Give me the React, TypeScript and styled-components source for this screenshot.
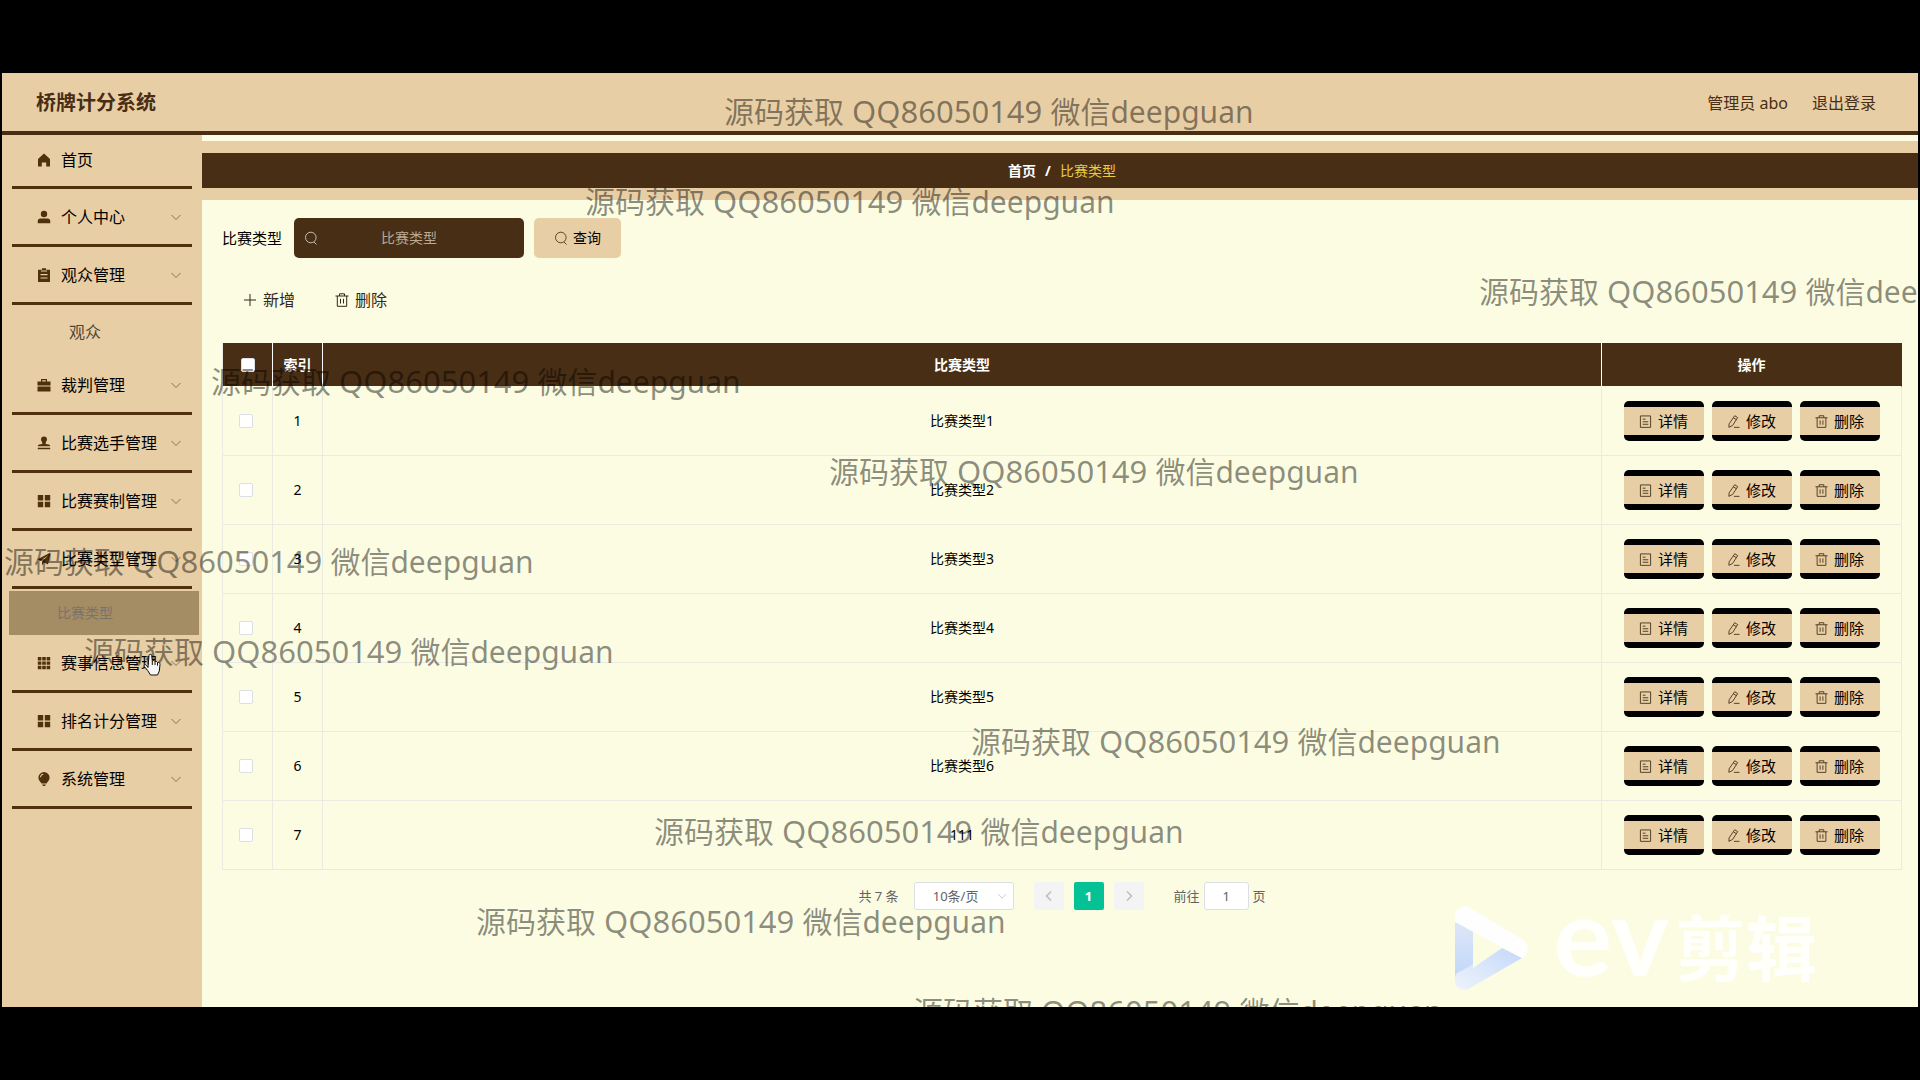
import React from 'react';
import styled, { createGlobalStyle, css } from 'styled-components';

const color = {
  sand: '#e8cea4',
  brown: '#482e15',
  line: '#4f310d',
  cream: '#fbfce1',
  grid: '#e9ebe3',
  muted: '#606266',
  green: '#04c295',
};

const GlobalStyle = createGlobalStyle`
  *, *::before, *::after { box-sizing: border-box; }
  body {
    margin: 0;
    background: #000;
    color: #000;
    font-family: 'Noto Sans', 'Noto Sans CJK SC', sans-serif;
    font-size: 14px;
    line-height: 20px;
  }
  button, input, select { font: inherit; color: inherit; margin: 0; }
  button { cursor: pointer; }
  a { color: inherit; text-decoration: none; }
`;

const Stage = styled.div`
  min-height: 100vh;
  padding: 73px 2px;
  display: flex;
`;

const Screen = styled.div`
  flex: 1;
  min-width: 0;
  display: flex;
  flex-direction: column;
  position: relative;
  overflow: hidden;
  background: ${color.cream};
`;

const Header = styled.header`
  height: 62px;
  padding: 2px 42px 0 34px;
  display: flex;
  align-items: center;
  justify-content: space-between;
  background: ${color.sand};
  border-bottom: 4px solid ${color.brown};
  color: ${color.brown};
`;

const Title = styled.h1`
  margin: 0;
  font-size: 20px;
  line-height: 28px;
  font-weight: 700;
`;

const UserArea = styled.div`
  display: flex;
  gap: 24px;
  font-size: 16px;
  line-height: 24px;
`;

const Body = styled.div`
  flex: 1;
  display: flex;
`;

const Sidebar = styled.nav`
  flex: none;
  width: 200px;
  background: ${color.sand};
`;

const MenuList = styled.ul`
  margin: 0;
  padding: 0;
  list-style: none;
`;

const MenuLink = styled.a<{ $first?: boolean }>`
  height: ${(p) => (p.$first ? 54 : 58)}px;
  margin: 0 10px;
  padding: ${(p) => (p.$first ? '0 9px 2px 25px' : '0 9px 0 25px')};
  display: flex;
  align-items: center;
  gap: 10px;
  border-bottom: 3px solid ${color.line};
  font-size: 16px;
  line-height: 24px;
  white-space: nowrap;

  & > svg { flex: none; color: ${color.line}; }
  & > svg:last-child { margin-left: auto; color: #8c7350; }
`;

const SubLink = styled.a<{ $active?: boolean }>`
  display: flex;
  align-items: center;
  height: 50px;
  margin: 2px 3px 0 7px;
  padding-left: 60px;
  font-size: 16px;
  line-height: 24px;
  color: #4f4536;
  ${(p) =>
    p.$active &&
    css`
      height: 44px;
      padding-left: 48px;
      font-size: 14px;
      background: #a48c65;
      color: #7c7367;
    `}
`;

const Main = styled.main`
  flex: 1;
  min-width: 0;
`;

const CrumbBar = styled.nav`
  margin-top: 6px;
  height: 59px;
  padding-left: 4px;
  display: flex;
  align-items: center;
  justify-content: center;
  gap: 9px;
  background: ${color.brown};
  border: solid ${color.sand};
  border-width: 12px 0;
  color: #fff;
  font-weight: 700;

  & > span:last-child { color: #ecc93f; font-weight: 400; }
`;

const Content = styled.div`
  padding: 18px 16px 0 20px;
`;

const SearchForm = styled.form`
  display: flex;
  align-items: center;

  & > label { font-size: 15px; margin-right: 12px; }
`;

const SearchBox = styled.div`
  width: 230px;
  height: 40px;
  margin-right: 10px;
  padding: 0 10px;
  display: flex;
  align-items: center;
  border-radius: 5px;
  background: ${color.brown};
  color: #c9c0b4;

  & > svg { flex: none; }
  & > input {
    flex: 1;
    min-width: 0;
    padding: 0 14px 0 0;
    border: 0;
    outline: 0;
    background: none;
    text-align: center;
    color: #fff;
  }
  & > input::placeholder { color: #b9aa97; opacity: 1; }
`;

const SearchButton = styled.button`
  width: 87px;
  height: 40px;
  padding: 0;
  display: flex;
  align-items: center;
  justify-content: center;
  gap: 5px;
  border: 0;
  border-radius: 5px;
  background: ${color.sand};

  & > svg { color: #5c4526; }
`;

const Toolbar = styled.div`
  display: flex;
  gap: 40px;
  padding: 30px 20px 31px 21px;
`;

const TextButton = styled.button`
  display: flex;
  align-items: center;
  gap: 6px;
  height: 24px;
  padding: 0;
  border: 0;
  background: none;
  font-size: 16px;
  color: #33281b;
`;

const Table = styled.table`
  width: 100%;
  table-layout: fixed;
  border-collapse: separate;
  border-spacing: 0;
  border-left: 1px solid ${color.grid};
  text-align: center;

  th, td { padding: 0; border-right: 1px solid ${color.grid}; }
  th {
    height: 44px;
    background: ${color.brown};
    color: #fff;
    border-right-color: #fff;
    border-bottom: 1px solid ${color.cream};
    font-weight: 700;
  }
  th:last-child { border-right-color: ${color.brown}; }
  td { height: 69px; border-bottom: 1px solid ${color.grid}; }
`;

const Col = styled.col<{ $w?: number }>`
  ${(p) => p.$w && `width: ${p.$w}px;`}
`;

const Check = styled.input`
  appearance: none;
  display: block;
  width: 14px;
  height: 14px;
  margin: 0 auto;
  border: 1px solid #dcdfe6;
  border-radius: 2px;
  background: #fff;

  td & { margin-left: 16px; }
  &:checked { background: ${color.green}; }
`;

const Actions = styled.div`
  display: flex;
  justify-content: center;
  gap: 8px;
`;

const ActionButton = styled.button`
  width: 80px;
  height: 40px;
  padding: 0;
  display: flex;
  align-items: center;
  justify-content: center;
  gap: 6px;
  border: solid #000;
  border-width: 6px 0;
  border-radius: 5px;
  background: ${color.sand};
  font-size: 15px;

  & > svg { color: #4a381f; }
`;

const Pager = styled.div`
  display: flex;
  justify-content: center;
  align-items: center;
  padding-top: 12px;
  font-size: 13px;
  color: ${color.muted};
`;

const SizePicker = styled.div`
  position: relative;
  width: 100px;
  margin: 0 20px 0 15px;

  & > select {
    appearance: none;
    display: block;
    width: 100%;
    height: 28px;
    padding: 0 16px 0 0;
    border: 1px solid #dcdfe6;
    border-radius: 3px;
    background: #fff;
    text-align: center;
    text-align-last: center;
  }
  & > svg {
    position: absolute;
    right: 6px;
    top: 8px;
    color: #c0c4cc;
    pointer-events: none;
  }
`;

const PageButton = styled.button<{ $active?: boolean }>`
  width: 30px;
  height: 28px;
  margin-right: 10px;
  padding: 0;
  display: flex;
  align-items: center;
  justify-content: center;
  border: 0;
  border-radius: 2px;
  background: ${(p) => (p.$active ? color.green : '#f4f4f5')};
  color: ${(p) => (p.$active ? '#fff' : '#bbbec6')};
  font-weight: 700;
`;

const Jump = styled.label`
  display: flex;
  align-items: center;
  gap: 4px;
  margin-left: 20px;

  & > input {
    width: 45px;
    height: 28px;
    padding: 0;
    border: 1px solid #dcdfe6;
    border-radius: 3px;
    background: #fff;
    text-align: center;
  }
`;

const Overlay = styled.div`
  position: absolute;
  inset: 0;
  pointer-events: none;
`;

const Mark = styled.span`
  position: absolute;
  font-size: 30px;
  line-height: 40px;
  white-space: pre;
  color: rgba(0, 0, 0, 0.45);
`;

const MarkNumber = styled.span`
  font-size: 31px;
`;

const Brand = styled.div`
  position: absolute;
  right: 101px;
  bottom: 17px;
  height: 84px;
  display: flex;
  align-items: center;
  color: rgba(255, 255, 255, 0.85);
  line-height: 84px;
  white-space: nowrap;

  & > svg { margin-right: 26px; }
`;

const BrandLatin = styled.span`
  font-family: Lato, sans-serif;
  font-size: 110px;
  font-weight: 700;
  margin: -30px 6px 0 0;
`;

const BrandHan = styled.span`
  font-size: 71px;
  font-weight: 700;
`;

const Cursor = styled.svg`
  position: absolute;
  left: 140px;
  top: 580px;
`;

const menuShapes: Record<string, React.ReactNode> = {
  home: <path d="M7 .6 13 6v7.4H9.2V9.5H4.8v3.9H1V6z" />,
  user: (
    <>
      <circle cx="7" cy="4" r="3.2" />
      <path d="M.8 13.2v-2c0-1.700.9-2.700 2.600-2.700h7.200c1.700 0 2.600 1 2.600 2.700v2z" />
    </>
  ),
  clipboard: (
    <path
      fillRule="evenodd"
      d="M5 .3h4v1.500h4V14H1V1.800h4zM4 2.600v1h6v-1zM3.500 6.100v1.100h7V6.100zm0 3.300v1.100h7V9.400z"
    />
  ),
  case: (
    <path
      fillRule="evenodd"
      d="M4 1h6v2.500h3.500v4H.500v-4H4zm1.200 1.200v1.300h3.600V2.200zM.500 8.500h13v5H.500z"
    />
  ),
  stamp: (
    <path d="M7 .5a3 3 0 0 1 3 3c0 1.500-1.300 2.300-1.300 3.500v1c2.300.3 4.600.5 4.600 2.200H.7C.7 8.500 3 8.300 5.300 8V7C5.300 5.800 4 5 4 3.500a3 3 0 0 1 3-3zM.8 11.800h12.400v1.400H.8z" />
  ),
  grid: <path d="M.8 1h5.400v5.400H.8zm7 0h5.400v5.400H7.800zM.8 7.800h5.400v5.400H.8zm7 0h5.400v5.400H7.800z" />,
  plane: <path d="M13.500.5 11 12.500 7 10.500 5 13.500V9.600L11 3.500 3.500 8.700.5 7.200z" />,
  cells: (
    <path d="M.8 1h3.600v3.400H.8zm4.400 0h3.600v3.400H5.200zm4.400 0h3.600v3.400H9.600zM.8 5.400h3.600v3.400H.8zm4.400 0h3.600v3.400H5.200zm4.400 0h3.600v3.400H9.600zM.8 9.800h3.600v3.400H.8zm4.400 0h3.600v3.400H5.200zm4.400 0h3.600v3.400H9.600z" />
  ),
  bulb: (
    <path
      fillRule="evenodd"
      d="M7 0a5.600 5.600 0 0 1 5.600 5.600c0 3-2.200 4.200-3.100 6H4.500c-.9-1.800-3.100-3-3.100-6A5.600 5.600 0 0 1 7 0zM3 5.300h1.100C4.200 3.800 5 2.900 6.300 2.700V1.700C4.400 1.900 3.100 3.300 3 5.300zM5 12.500h4L8 14H6z"
    />
  ),
};

const lineShapes: Record<string, React.ReactNode> = {
  down: <path d="m2.500 5 4.500 4.500L11.500 5" />,
  left: <path strokeWidth="1.600" d="M9 2.500 4.500 7 9 11.500" />,
  right: <path strokeWidth="1.600" d="M5 2.500 9.500 7 5 11.500" />,
  search: (
    <>
      <circle cx="6.800" cy="6.500" r="5.300" />
      <path d="m10 11 2.500 2.500" />
    </>
  ),
  plus: <path d="M7 1v12M1 7h12" />,
  trash: <path d="M.5 3h13M4.500 3V.8h5V3M2.300 3v10.300h9.400V3M5.500 5.800v4.700M8.500 5.800v4.700" />,
  doc: <path d="M1.500 1h11v12.300h-11zM4 4.500h3M4 7.300h6M4 10h6" />,
  edit: <path d="M8.300.8 11.500 2.800 6 11.300 2 13.300 2.300 9.500zM6.800 3 10 5M7.500 13.300h6" />,
};

const Solid = ({ name }: { name: string }) => (
  <svg width="14" height="14" viewBox="0 0 14 14" fill="currentColor" aria-hidden="true">
    {menuShapes[name]}
  </svg>
);

const Line = ({ name, size = 14 }: { name: string; size?: number }) => (
  <svg
    width={size}
    height={size}
    viewBox="0 0 14 14"
    fill="none"
    stroke="currentColor"
    strokeWidth="1"
    aria-hidden="true"
  >
    {lineShapes[name]}
  </svg>
);

const menu: { icon: string; label: string; sub?: string; active?: boolean }[] = [
  { icon: 'home', label: '首页' },
  { icon: 'user', label: '个人中心' },
  { icon: 'clipboard', label: '观众管理', sub: '观众' },
  { icon: 'case', label: '裁判管理' },
  { icon: 'stamp', label: '比赛选手管理' },
  { icon: 'grid', label: '比赛赛制管理' },
  { icon: 'plane', label: '比赛类型管理', sub: '比赛类型', active: true },
  { icon: 'cells', label: '赛事信息管理' },
  { icon: 'grid', label: '排名计分管理' },
  { icon: 'bulb', label: '系统管理' },
];

const rows = ['比赛类型1', '比赛类型2', '比赛类型3', '比赛类型4', '比赛类型5', '比赛类型6', '111'];

const actions = [
  { icon: 'doc', label: '详情' },
  { icon: 'edit', label: '修改' },
  { icon: 'trash', label: '删除' },
];

// Horizontal start of each watermark line; the lines are 90px apart.
const markStarts = [722, 583, 1477, 209, 827, 2, 82, 969, 652, 474, 911];

export default function App() {
  return (
    <Stage>
      <GlobalStyle />
      <Screen>
        <Header>
          <Title>桥牌计分系统</Title>
          <UserArea>
            <span>管理员 abo</span>
            <a href="#logout">退出登录</a>
          </UserArea>
        </Header>
        <Body>
          <Sidebar aria-label="主菜单">
            <MenuList>
              {menu.map((item, i) => (
                <li key={item.label}>
                  <MenuLink href="#menu" $first={i === 0}>
                    <Solid name={item.icon} />
                    <span>{item.label}</span>
                    {i > 0 && <Line name="down" />}
                  </MenuLink>
                  {item.sub && (
                    <SubLink href="#sub" $active={item.active}>
                      {item.sub}
                    </SubLink>
                  )}
                </li>
              ))}
            </MenuList>
          </Sidebar>
          <Main>
            <CrumbBar aria-label="面包屑">
              <a href="#home">首页</a>
              <span>/</span>
              <span>比赛类型</span>
            </CrumbBar>
            <Content>
              <SearchForm onSubmit={(e) => e.preventDefault()}>
                <label htmlFor="type">比赛类型</label>
                <SearchBox>
                  <Line name="search" />
                  <input id="type" placeholder="比赛类型" />
                </SearchBox>
                <SearchButton type="submit">
                  <Line name="search" />
                  查询
                </SearchButton>
              </SearchForm>
              <Toolbar>
                <TextButton type="button">
                  <Line name="plus" />
                  新增
                </TextButton>
                <TextButton type="button">
                  <Line name="trash" />
                  删除
                </TextButton>
              </Toolbar>
              <Table>
                <colgroup>
                  <Col $w={50} />
                  <Col $w={50} />
                  <Col />
                  <Col $w={300} />
                </colgroup>
                <thead>
                  <tr>
                    <th>
                      <Check type="checkbox" aria-label="全选" />
                    </th>
                    <th>索引</th>
                    <th>比赛类型</th>
                    <th>操作</th>
                  </tr>
                </thead>
                <tbody>
                  {rows.map((name, i) => (
                    <tr key={name}>
                      <td>
                        <Check type="checkbox" aria-label={name} />
                      </td>
                      <td>{i + 1}</td>
                      <td>{name}</td>
                      <td>
                        <Actions>
                          {actions.map((a) => (
                            <ActionButton key={a.label} type="button">
                              <Line name={a.icon} size={13} />
                              {a.label}
                            </ActionButton>
                          ))}
                        </Actions>
                      </td>
                    </tr>
                  ))}
                </tbody>
              </Table>
              <Pager>
                <span>共 7 条</span>
                <SizePicker>
                  <select aria-label="每页条数">
                    <option>10条/页</option>
                  </select>
                  <Line name="down" size={12} />
                </SizePicker>
                <PageButton type="button" aria-label="上一页">
                  <Line name="left" />
                </PageButton>
                <PageButton type="button" $active>
                  1
                </PageButton>
                <PageButton type="button" aria-label="下一页">
                  <Line name="right" />
                </PageButton>
                <Jump>
                  前往
                  <input defaultValue="1" />页
                </Jump>
              </Pager>
            </Content>
          </Main>
        </Body>
        <Overlay>
          {markStarts.map((left, i) => (
            <Mark key={left} style={{ left, top: 18 + i * 90 }}>
              源码获取<MarkNumber> QQ86050149 </MarkNumber>微信deepguan
            </Mark>
          ))}
          <Brand>
            <svg width="73" height="84" viewBox="0 0 73 84" aria-hidden="true">
              <defs>
                <linearGradient id="side" x1="0" y1="0" x2="0" y2="1">
                  <stop offset="0" stopColor="#dfe7f6" />
                  <stop offset="1" stopColor="#bfd6fb" />
                </linearGradient>
                <linearGradient id="base" x1="0" y1="1" x2="1" y2="0">
                  <stop offset="0" stopColor="#eef3fa" />
                  <stop offset="1" stopColor="#c4d8fa" />
                </linearGradient>
              </defs>
              <path d="M0 14h18v48L0 74z" fill="url(#side)" />
              <path d="M0 72c0-4 3-6 6-7L47 42l20 10L15 82C8 86 0 82 0 75z" fill="url(#base)" />
              <path d="M0 10C0 2 8-2 15 2l52 31c8 5 8 15 0 19L0 16z" fill="#fefefe" />
              <path d="M18 27v35l29-20z" fill="#fbfce1" />
            </svg>
            <BrandLatin>ev</BrandLatin>
            <BrandHan>剪辑</BrandHan>
          </Brand>
          <Cursor width="20" height="24" viewBox="0 0 20 24" aria-hidden="true">
            <path
              d="M6 14.500 7 2.500c.2-1.600 2.600-1.600 2.700 0l.6 5.500c1.200-.8 2.300-.3 2.700.6 1.200-.6 2.200 0 2.500.9 1.400-.4 2.500.4 2.500 2l-.7 6.500-1.800 4H8.500L5.700 17.500 2.300 13.500c-.8-1.600 1.200-2.400 2.200-1.200z"
              fill="#f7f7f7"
              stroke="#111"
            />
            <path d="M10.300 8v4M13 8.800V12M15.500 9.700v3" fill="none" stroke="#111" />
          </Cursor>
        </Overlay>
      </Screen>
    </Stage>
  );
}
